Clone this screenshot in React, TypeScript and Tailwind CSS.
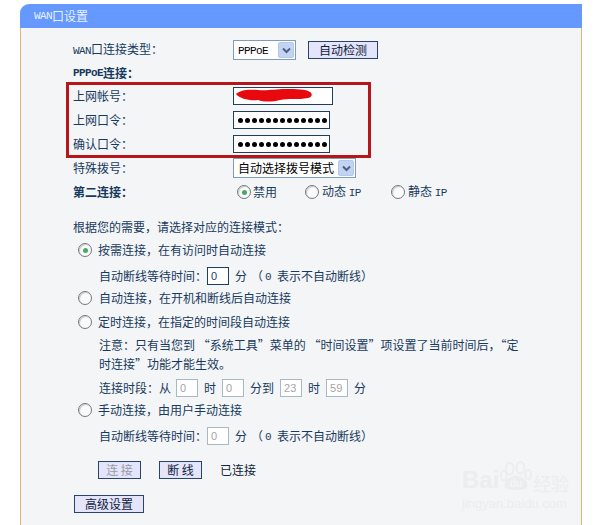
import type { ReactNode } from 'react'

const cjk = "font-['Noto_Sans_CJK_SC','Liberation_Sans',sans-serif]"

function Latin({ children }: { children: ReactNode }) {
  return <span className="font-['Liberation_Mono',monospace] text-[11px] tracking-[-0.6px]">{children}</span>
}

function Radio({ on = false }: { on?: boolean }) {
  return (
    <span className="flex h-[14px] w-[14px] shrink-0 items-center justify-center rounded-full border border-[#6f7a80] bg-[#fbfbfb] shadow-[inset_1px_1px_1px_#c9ccc8]">
      {on && <span className="h-[5px] w-[5px] rounded-full bg-[#4aa860]" />}
    </span>
  )
}

function Arrow() {
  return (
    <span className="flex h-[16px] w-[16px] items-center justify-center rounded-[2px] border border-[#b5c8ea] bg-[#c3d3f3]">
      <svg width="9" height="7" viewBox="0 0 9 7">
        <path d="M1 1.5 L4.5 5 L8 1.5" fill="none" stroke="#4d6185" strokeWidth="2" />
      </svg>
    </span>
  )
}

function Select({ width, children }: { width: string; children: ReactNode }) {
  return (
    <div className={`flex items-center justify-between border border-[#7f9db9] bg-white pl-[4px] pr-[1px] text-black ${width} h-[20px]`}>
      <span>{children}</span>
      <Arrow />
    </div>
  )
}

function Dots() {
  return (
    <div className="flex h-[18px] w-[97px] items-center gap-[2px] border border-[#1f3f5c] bg-white pl-[4px]">
      {Array.from({ length: 13 }).map((_, i) => (
        <span key={i} className="h-[5px] w-[5px] rounded-full bg-black" />
      ))}
    </div>
  )
}

function SmallInput({ value, muted = false }: { value: string; muted?: boolean }) {
  return (
    <span className={`flex h-[18px] w-[22px] items-center border bg-white pl-[3px] font-['Liberation_Sans',sans-serif] text-[11px] leading-none ${muted ? 'border-[#a9b9c4] text-[#a5a5a5]' : 'border-[#1f3f5c] text-[#1f3f5c]'}`}>
      {value}
    </span>
  )
}

function Btn({ children, width, muted = false }: { children: ReactNode; width: string; muted?: boolean }) {
  return (
    <span className={`flex h-[18px] items-center justify-center border border-[#2a4468] bg-[#e4e4fa] ${muted ? 'text-[#9a9aa8]' : 'text-[#10233a]'} ${width}`}>
      {children}
    </span>
  )
}

function IdleHint() {
  return (
    <span className="ml-[6px] flex items-center">
      分<span className="ml-[4px]">（</span>
      <span className="ml-[2px]"><Latin>0</Latin></span>
      <span className="ml-[6px]">表示不自动断线）</span>
    </span>
  )
}

export default function App() {
  return (
    <div className={`relative h-[525px] w-[601px] overflow-hidden bg-white pt-[4px] pl-[20px] text-[12px] leading-none text-[#173a5e] ${cjk}`}>
      <div className="w-[562px]">
        <div className="flex h-[24px] items-center rounded-tl-[9px] bg-[#6699ff] pl-[14px] text-[#e9f0ff]">
          <Latin>WAN</Latin>口设置
        </div>
        <div className="h-[520px] border-x border-[#e0b27c] bg-[#f4f5f6] pt-[10px] pl-[52px]">
          <div className="flex h-[24px] items-center">
            <span className="w-[160px]"><Latin>WAN</Latin>口连接类型：</span>
            <Select width="w-[63px]"><Latin>PPPoE</Latin></Select>
            <span className="ml-[12px]"><Btn width="w-[70px]">自动检测</Btn></span>
          </div>
          <div className="flex h-[22px] items-center font-bold"><Latin>PPPoE</Latin>连接：</div>
          <div className="flex h-[24px] items-center">
            <span className="w-[160px]">上网帐号：</span>
            <div className="relative h-[18px] w-[100px] border border-[#1f3f5c] bg-white">
              <svg className="absolute left-0 top-0" width="80" height="16" viewBox="0 0 80 16">
                <path d="M2 6 C6 2 14 1 24 2 C34 3 40 1 52 1 C62 1 72 1 76 4 C79 6 78 9 74 10 C64 12 54 10 46 12 C38 14 30 14 24 12 C16 13 6 11 2 6 Z" fill="#e8090f" />
              </svg>
            </div>
          </div>
          <div className="flex h-[24px] items-center">
            <span className="w-[160px]">上网口令：</span>
            <Dots />
          </div>
          <div className="flex h-[24px] items-center">
            <span className="w-[160px]">确认口令：</span>
            <Dots />
          </div>
          <div className="flex h-[24px] items-center">
            <span className="w-[160px]">特殊拨号：</span>
            <Select width="w-[123px]">自动选择拨号模式</Select>
          </div>
          <div className="flex h-[24px] items-center">
            <span className="w-[164px] font-bold">第二连接：</span>
            <span className="flex w-[68px] items-center gap-[2px]"><Radio on />禁用</span>
            <span className="flex w-[86px] items-center gap-[3px]"><Radio /><span>动态 <Latin>IP</Latin></span></span>
            <span className="flex items-center gap-[3px]"><Radio /><span>静态 <Latin>IP</Latin></span></span>
          </div>
          <div className="mt-[11px] flex h-[24px] items-center">根据您的需要，请选择对应的连接模式：</div>
          <div className="flex h-[22px] items-center gap-[6px] pl-[5px]"><Radio on />按需连接，在有访问时自动连接</div>
          <div className="mt-[2px] flex h-[26px] items-center pl-[26px]">
            自动断线等待时间：<SmallInput value="0" /><IdleHint />
          </div>
          <div className="flex h-[18px] items-center gap-[7px] pl-[5px]"><Radio />自动连接，在开机和断线后自动连接</div>
          <div className="flex h-[30px] items-center gap-[6px] pl-[5px]"><Radio />定时连接，在指定的时间段自动连接</div>
          <div className="-mt-[2px] w-[446px] pl-[26px] leading-[19px]">注意：只有当您到 “系统工具”菜单的 “时间设置”项设置了当前时间后，“定时连接”功能才能生效。</div>
          <div className="mt-[3px] flex h-[24px] items-center pl-[26px]">
            连接时段：从<span className="ml-[5px]"><SmallInput value="0" muted /></span>
            <span className="mx-[6px]">时</span><SmallInput value="0" muted />
            <span className="mx-[6px]">分到</span><SmallInput value="23" muted />
            <span className="mx-[6px]">时</span><SmallInput value="59" muted />
            <span className="ml-[6px]">分</span>
          </div>
          <div className="flex h-[20px] items-center gap-[6px] pl-[5px]"><Radio />手动连接，由用户手动连接</div>
          <div className="flex h-[32px] items-center pl-[26px]">
            自动断线等待时间：<SmallInput value="0" muted /><IdleHint />
          </div>
          <div className="mt-[6px] flex h-[24px] items-center pl-[25px]">
            <Btn width="w-[43px]" muted>连 接</Btn>
            <span className="ml-[18px]"><Btn width="w-[43px]">断 线</Btn></span>
            <span className="ml-[18px] text-[#10233a]">已连接</span>
          </div>
          <div className="mt-[10px] flex h-[24px] items-center pl-[1px]">
            <Btn width="w-[70px]">高级设置</Btn>
          </div>
        </div>
      </div>

      {/* annotation drawn over the form */}
      <div className="absolute left-[66px] top-[82px] h-[76px] w-[305px] border-[3px] border-[#b5161b]" />

      {/* watermark */}
      <div className="absolute left-[462px] top-[460px] w-[110px] text-[#ecedee]">
        <div className="flex items-end font-['Liberation_Sans',sans-serif] text-[24px] font-bold leading-[26px]">
          <span>Bai</span>
          <svg width="33" height="33" viewBox="0 0 34 32" className="ml-[1px]">
            <ellipse cx="10" cy="8" rx="4" ry="6" fill="none" stroke="#ecedee" strokeWidth="2" />
            <ellipse cx="21" cy="7" rx="4" ry="6" fill="none" stroke="#ecedee" strokeWidth="2" />
            <ellipse cx="29" cy="14" rx="3" ry="5" fill="none" stroke="#ecedee" strokeWidth="2" />
            <ellipse cx="4" cy="15" rx="3" ry="5" fill="none" stroke="#ecedee" strokeWidth="2" />
            <path d="M5 27 C3 20 11 15 16 15 C22 15 30 20 28 27 C26 31 8 31 5 27 Z" fill="#ecedee" />
            <text x="16.5" y="27" textAnchor="middle" fontSize="11" fontWeight="700" fill="#f4f5f6">du</text>
          </svg>
          <span className={`${cjk} text-[18px] font-normal leading-[20px]`}>经验</span>
        </div>
        <div className="mt-[4px] font-['Liberation_Sans',sans-serif] text-[13px] leading-none">jingyan.baidu.com</div>
      </div>
    </div>
  )
}
